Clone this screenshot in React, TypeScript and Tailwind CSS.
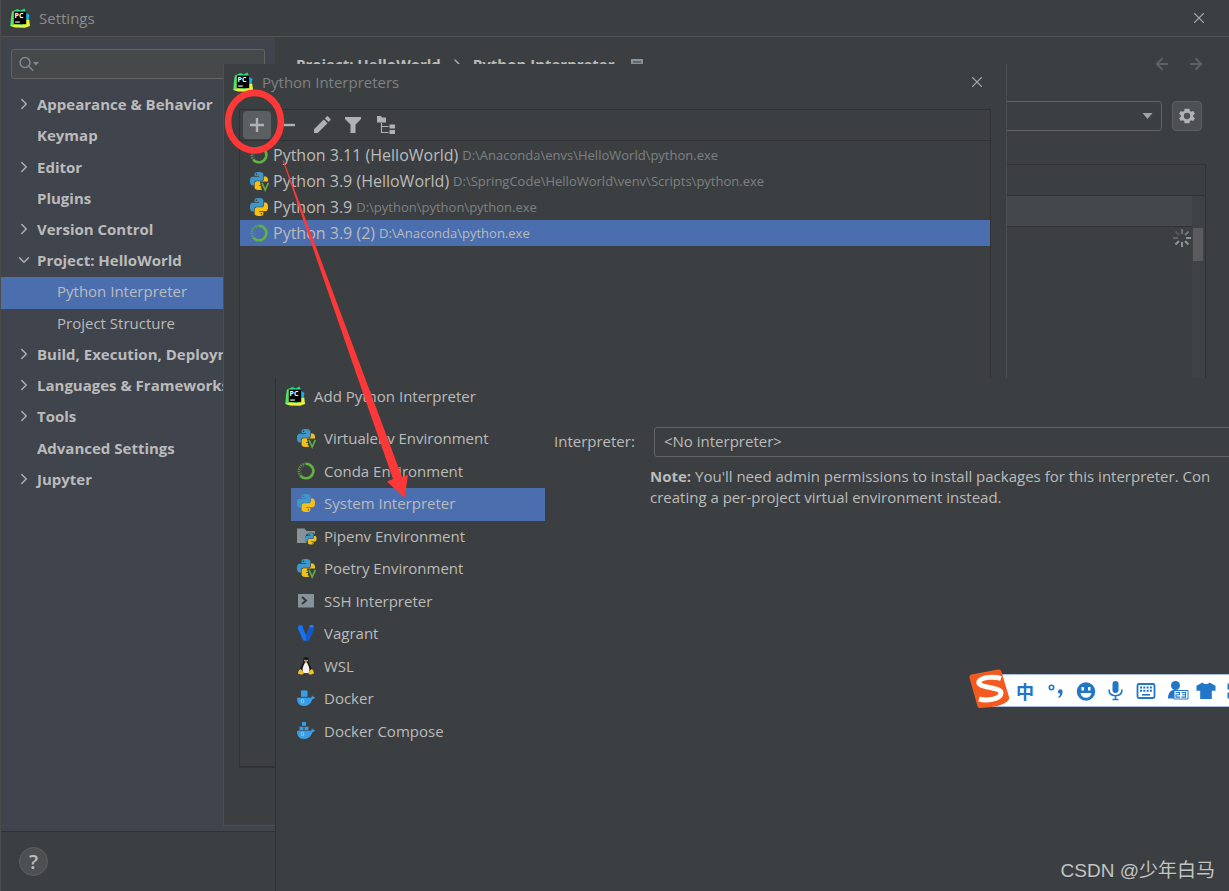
import clsx from "clsx";
import { ArrowLeft, ArrowRight, ChevronDown, ChevronRight, X } from "lucide-react";
import type { ReactNode } from "react";

interface TreeItem {
  label: string;
  state?: "open" | "closed";
  child?: boolean;
  selected?: boolean;
}

interface Interpreter {
  name: string;
  path: string;
  icon: ReactNode;
  selected?: boolean;
}

interface EnvironmentType {
  label: string;
  icon: ReactNode;
  selected?: boolean;
}

const PYTHON_HALF =
  "M14.25.18l.9.2.73.26.59.3.45.32.34.34.25.34.16.33.1.3.04.26.02.2-.01.13V8.5l-.05.63-.13.55-.21.46-.26.38-.3.31-.33.25-.35.19-.35.14-.33.1-.3.07-.26.04-.21.02H8.77l-.69.05-.59.14-.5.22-.41.27-.33.32-.27.35-.2.36-.15.37-.1.35-.07.32-.04.27-.02.21v3.06H3.17l-.21-.03-.28-.07-.32-.12-.35-.18-.36-.26-.36-.36-.35-.46-.32-.59-.28-.73-.21-.88-.14-1.05-.05-1.23.06-1.22.16-1.04.24-.87.32-.71.36-.57.4-.44.42-.33.42-.24.4-.16.36-.1.32-.05.24-.01h.16l.06.01h8.16v-.83H6.18l-.01-2.75-.02-.37.05-.34.11-.31.17-.28.25-.26.31-.23.38-.2.44-.18.51-.15.58-.12.64-.1.71-.06.77-.04.84-.02 1.27.05zm-6.3 1.98l-.23.33-.08.41.08.41.23.34.33.22.41.09.41-.09.33-.22.23-.34.08-.41-.08-.41-.23-.33-.33-.22-.41-.09-.41.09z";

function PythonShape() {
  return (
    <>
      <path d={PYTHON_HALF} fill="#3d97c9" />
      <path d={PYTHON_HALF} fill="#f5c012" transform="rotate(180 12 12)" />
    </>
  );
}

function PythonIcon() {
  return (
    <svg viewBox="0 0 24 24" className="size-[18px]">
      <PythonShape />
    </svg>
  );
}

function VenvIcon() {
  return (
    <svg viewBox="0 0 24 24" className="size-[18px] overflow-visible">
      <PythonShape />
      <path d="M13 12.5h13.5l-4 14h-5.5z" className="fill-[#3c3f41]" />
      <path d="M16 14.5l4.2 9.5 4.3-9.500" fill="none" stroke="#5fad3f" strokeWidth="2.200" />
    </svg>
  );
}

function CondaIcon() {
  return (
    <svg viewBox="0 0 18 18" className="size-[18px]" fill="none" stroke="#5fb53c">
      <path d="M9 1.700a7.300 7.300 0 1 1-5.500 12.100" strokeWidth="2.600" />
      <path d="M3.800 14.100A7.300 7.300 0 0 1 9 1.700" strokeWidth="2.400" strokeDasharray="1.300 0.900" opacity="0.75" />
      <path d="M5.200 12.500A5.400 5.400 0 0 1 8 3.700" strokeWidth="0.800" strokeDasharray="1 1.200" opacity="0.700" />
    </svg>
  );
}

function PipenvIcon() {
  return (
    <svg viewBox="0 0 20 18" className="h-[18px] w-[20px]">
      <path d="M0 1.500h7.500l2 2.500H18v12H0z" fill="#87939a" />
      <circle cx="14" cy="11.500" r="6" fill="#3c3f41" />
      <g transform="translate(8 6) scale(0.480)">
        <PythonShape />
      </g>
    </svg>
  );
}

function SshIcon() {
  return (
    <svg viewBox="0 0 18 18" className="size-[18px]">
      <path d="M1 2h16v13.500H1z" fill="#87939a" />
      <path d="M5 5l4 3.500L5 12" fill="none" stroke="#34383a" strokeWidth="2" />
    </svg>
  );
}

function VagrantIcon() {
  return (
    <svg viewBox="0 0 18 18" className="size-[18px]">
      <path d="M1 2.200L3.500 1 6 2.200v2L9 11.500l3-7.300v-2L14.500 1 17 2.200v2.600l-5 11.400L9 17l-3-.8L1 4.800z" fill="#1a72f0" />
      <path d="M12 2.200L17 2.200v2.600l-5 11.400L9 17v-5.500l3-7.300z" fill="#1459c9" />
      <path d="M12 2.200L14.500 1 17 2.200l-2.500 1.200z" fill="#2a85ff" />
    </svg>
  );
}

function LinuxIcon() {
  return (
    <svg viewBox="0 0 18 18" className="size-[18px]">
      <path d="M9 0C6.800 0 6.200 1.700 6.300 3.500c.1 2-.5 3-1.500 4.500C3.500 10 3 12 3.300 14.500h11.400c.3-2.500-.4-4.800-1.700-6.500-1-1.400-1.400-2.500-1.300-4.500C11.800 1.500 11.200 0 9 0z" fill="#17191a" />
      <path d="M9 5.500c-1.300.2-1.700 1.500-2.400 3-1 2-1.600 5-.1 7.500h5c1.500-2.500.8-5.500-.1-7.500-.7-1.500-1.100-2.800-2.400-3z" fill="#f3f3f3" />
      <circle cx="7.900" cy="3.400" r="0.700" fill="#eee" />
      <circle cx="10.100" cy="3.400" r="0.700" fill="#eee" />
      <path d="M7.300 4.800L9 4l1.700.8L9 6.200z" fill="#f5b71c" />
      <path d="M3.200 12l2.200 1.500 1.300 3c-1 1.300-2.500 1.300-4 .8l-1.800-.8.700-2.500zM14.800 12l-2.200 1.500-1.300 3c1 1.300 2.500 1.300 4 .8l1.800-1.300-.9-2.500z" fill="#f7bd1a" />
    </svg>
  );
}

function DockerIcon({ compose }: { compose?: boolean }) {
  return (
    <svg viewBox="0 0 18 18" className="size-[18px]" fill="#379fea">
      <path d="M0 8.800h14c.8-.6 1-1.500.7-3l1.300 2 2 .2c-.2 1.300-1.200 2-2.700 2.200C14 14.700 11 17 7 17c-4.700 0-7-3-7-8.200z" />
      {compose ? (
        <path d="M5 0h4v3.800H5zM2.500 4.800h4v3.400h-4zM7.500 4.800h4v3.400h-4z" />
      ) : (
        <path d="M4 1.500h6.500v6.300H4z" />
      )}
      <ellipse cx="5.500" cy="12" rx="1.300" ry="1.900" fill="none" stroke="#9fd4fb" strokeWidth="0.800" />
    </svg>
  );
}

function PyCharmLogo() {
  return (
    <svg viewBox="0 0 20 20" className="size-5 shrink-0">
      <path d="M2 3.500L7.500 1l3 1.500L14.500.5 16 4l1 14.500L12 19l-7-.2L.5 18 .8 11z" fill="#28dc86" />
      <path d="M14 3.500l5.500 3.500-1 4.500-2.500 1z" fill="#10b5f0" />
      <path d="M1.500 15.500L.5 18l4.500 1.500 10 .3 5-1.800-.8-6.500-3 .5-4 5z" fill="#e8f43c" />
      <path d="M2 4l2-1 .3 14L.5 17.500z" fill="#5be35a" />
      <path d="M3.800 3.600h12.400v12.600H3.800z" fill="#000" />
      <text x="4.500" y="10" fontSize="7" fontWeight="700" fill="#fff" className="font-['Open_Sans',sans-serif]">
        PC
      </text>
      <path d="M5.200 13.500h4.600v1.100H5.200z" fill="#fff" />
    </svg>
  );
}

const tree: TreeItem[] = [
  { label: "Appearance & Behavior", state: "closed" },
  { label: "Keymap" },
  { label: "Editor", state: "closed" },
  { label: "Plugins" },
  { label: "Version Control", state: "closed" },
  { label: "Project: HelloWorld", state: "open" },
  { label: "Python Interpreter", child: true, selected: true },
  { label: "Project Structure", child: true },
  { label: "Build, Execution, Deployment", state: "closed" },
  { label: "Languages & Frameworks", state: "closed" },
  { label: "Tools", state: "closed" },
  { label: "Advanced Settings" },
  { label: "Jupyter", state: "closed" },
];

const interpreters: Interpreter[] = [
  { name: "Python 3.11 (HelloWorld)", path: "D:\\Anaconda\\envs\\HelloWorld\\python.exe", icon: <CondaIcon /> },
  { name: "Python 3.9 (HelloWorld)", path: "D:\\SpringCode\\HelloWorld\\venv\\Scripts\\python.exe", icon: <VenvIcon /> },
  { name: "Python 3.9", path: "D:\\python\\python\\python.exe", icon: <PythonIcon /> },
  { name: "Python 3.9 (2)", path: "D:\\Anaconda\\python.exe", icon: <CondaIcon />, selected: true },
];

const environments: EnvironmentType[] = [
  { label: "Virtualenv Environment", icon: <VenvIcon /> },
  { label: "Conda Environment", icon: <CondaIcon /> },
  { label: "System Interpreter", icon: <PythonIcon />, selected: true },
  { label: "Pipenv Environment", icon: <PipenvIcon /> },
  { label: "Poetry Environment", icon: <VenvIcon /> },
  { label: "SSH Interpreter", icon: <SshIcon /> },
  { label: "Vagrant", icon: <VagrantIcon /> },
  { label: "WSL", icon: <LinuxIcon /> },
  { label: "Docker", icon: <DockerIcon /> },
  { label: "Docker Compose", icon: <DockerIcon compose /> },
];

function Sidebar() {
  return (
    <aside className="w-[274px] shrink-0 bg-[#40444d]">
      <div className="mx-[10px] mt-3 flex h-[30px] items-center rounded-[3px] border border-[#646464] bg-[#45494a] pl-[7px]">
        <svg viewBox="0 0 22 16" className="h-4 w-[22px]" fill="none" stroke="#7f8b91" strokeWidth="1.500">
          <circle cx="6" cy="6.500" r="5" />
          <path d="M9.700 10.200l4.500 4.500" />
          <path d="M14 6h6l-3 3.500z" fill="#7f8b91" stroke="none" />
        </svg>
        <input aria-label="Search settings" className="min-w-0 flex-1 bg-transparent outline-none" />
      </div>
      <ul className="mt-[11px] grid h-[406px] auto-rows-fr">
        {tree.map((item) => (
          <li key={item.label} className="flex">
            <button
              className={clsx(
                "flex w-full items-center pb-[3px] text-left whitespace-nowrap",
                item.child ? "pl-14" : "pl-[14px] font-bold",
                item.selected && "bg-[#4b6eaf]",
              )}
            >
              {!item.child && (
                <span className="w-[22px] text-[#adb0b2]">
                  {item.state === "closed" && <ChevronRight className="size-[18px]" />}
                  {item.state === "open" && <ChevronDown className="size-[18px]" />}
                </span>
              )}
              {item.label}
            </button>
          </li>
        ))}
      </ul>
    </aside>
  );
}

function ProjectInterpreterPanel() {
  return (
    <main className="flex min-w-0 flex-1 flex-col pr-[23px]">
      <div className="mt-[15px] flex h-6 items-center pr-px pl-[21px]">
        <span className="font-bold">Project: HelloWorld</span>
        <ChevronRight className="mx-2 size-4 text-[#adb0b2]" />
        <span className="font-bold">Python Interpreter</span>
        <svg viewBox="0 0 12 10" className="ml-4 h-[10px] w-3">
          <path d="M0 0h12v10H0z" fill="#87939a" />
          <path d="M2 3h8M2 6h8" stroke="#3c3f41" />
        </svg>
        <div className="ml-auto flex gap-4 text-[#5e6164]">
          <button aria-label="Back">
            <ArrowLeft className="size-[18px]" strokeWidth={2.5} />
          </button>
          <button aria-label="Forward">
            <ArrowRight className="size-[18px]" strokeWidth={2.5} />
          </button>
        </div>
      </div>
      <div className="mt-[25px] flex gap-[10px] pl-[150px] pr-1">
        <div className="relative flex-1">
          <select aria-label="Python Interpreter" className="h-[30px] w-full appearance-none rounded-[3px] border border-[#646464] bg-[#3c3f41]" />
          <svg viewBox="0 0 10 6" className="pointer-events-none absolute top-3 right-[9px] h-[6px] w-[11px]">
            <path d="M0 0h10L5 6z" fill="#9fa2a4" />
          </svg>
        </div>
        <button aria-label="Interpreter options" className="flex size-[30px] items-center justify-center rounded-[4px] border border-[#5e6060] bg-[#4c5052]">
          <svg viewBox="0 0 24 24" className="size-5" fill="#afb1b3">
            <path d="M19.400 13a7.500 7.500 0 0 0 0-2l2.100-1.700-2-3.400-2.500 1a7.300 7.300 0 0 0-1.700-1L15 3.300h-6l-.3 2.600a7.300 7.300 0 0 0-1.700 1l-2.500-1-2 3.400L4.600 11a7.500 7.500 0 0 0 0 2l-2.100 1.700 2 3.400 2.500-1a7.300 7.300 0 0 0 1.700 1l.3 2.600h6l.3-2.600a7.300 7.300 0 0 0 1.700-1l2.500 1 2-3.400zM12 15.800a3.800 3.800 0 1 1 0-7.600 3.800 3.800 0 0 1 0 7.600z" />
          </svg>
        </button>
      </div>
      <div className="mt-[33px] flex flex-1 flex-col border border-[#323232]">
        <div className="h-[31px] border-b border-[#323232]" />
        <div className="flex flex-1">
          <div className="flex-1">
            <div className="h-[31px] border-b border-[#323232] bg-[#45484a]" />
            <svg viewBox="0 0 18 18" className="mt-[2px] mr-px ml-auto size-[18px]" stroke="#8b9499" strokeWidth="2">
              <path d="M9 0v5" opacity="0.600" />
              <path d="M12 6l3.500-3.500" opacity="0.700" />
              <path d="M13 9h5M12 12l3.500 3.500M9 13v5M6 12l-3.500 3.500" />
              <path d="M5 9H0" opacity="0.450" />
              <path d="M6 6L2.500 2.500" opacity="0.300" />
            </svg>
          </div>
          <div className="w-[13px] bg-[#3f4244] pt-8">
            <div className="ml-px h-[33px] w-[10px] bg-[#595b5d]" />
          </div>
        </div>
      </div>
    </main>
  );
}

function InterpretersDialog() {
  return (
    <section className="absolute top-16 right-[222px] bottom-[65px] left-[222px] flex flex-col border-x border-b border-[#4b4e53] bg-[#3c3f41] px-[15px] pb-[57px]">
      <header className="-ml-[6px] flex h-[45px] items-center pb-[10px] text-[#7e8183]">
        <PyCharmLogo />
        <h2 className="ml-[9px]">Python Interpreters</h2>
        <button aria-label="Close" className="mr-[5px] ml-auto text-[#a2a4a6]">
          <X className="size-[18px]" strokeWidth={1.5} />
        </button>
      </header>
      <div className="flex-1 border border-b-2 border-[#323232]">
        <div className="flex h-[31px] items-center border-b border-[#323232] pl-[3px] text-[#afb1b3]">
          <button aria-label="Add" className="flex size-7 items-center justify-center rounded-[4px] bg-[#5b5f61]">
            <svg viewBox="0 0 14 14" className="size-[14px]" stroke="currentColor" strokeWidth="2.400">
              <path d="M7 0v14M0 7h14" />
            </svg>
          </button>
          <button aria-label="Remove" className="ml-2">
            <svg viewBox="0 0 16 16" className="size-4" stroke="currentColor" strokeWidth="2.400">
              <path d="M1 8h15" />
            </svg>
          </button>
          <button aria-label="Edit" className="ml-[18px]">
            <svg viewBox="0 0 18 18" className="size-[18px]" fill="currentColor">
              <path d="M1 13.300L10.800 3.500l3.700 3.700L4.700 17H1zM11.900 2.400L13.700.6c.4-.4 1-.4 1.400 0l2.300 2.300c.4.4.4 1 0 1.400l-1.800 1.800z" />
            </svg>
          </button>
          <button aria-label="Filter" className="ml-[14px]">
            <svg viewBox="0 0 16 16" className="size-4" fill="currentColor">
              <path d="M0 0h16v2l-5.500 5.500V16h-5V7.500L0 2z" />
            </svg>
          </button>
          <button aria-label="Show paths" className="ml-4">
            <svg viewBox="0 0 19 18" className="h-[18px] w-[19px]" fill="currentColor">
              <path d="M0 0h4l1 1.500h4V6.500H0zM12.500 8.500h5.500v4h-5.500zM12.500 14h5.500v4h-5.500z" />
              <path d="M4.500 7v9.500h7M4.500 10.500h7" fill="none" stroke="currentColor" strokeWidth="1.200" />
            </svg>
          </button>
        </div>
        <ul className="pt-px">
          {interpreters.map((item) => (
            <li
              key={item.name}
              className={clsx("flex h-[26px] items-center pl-[10px]", item.selected && "bg-[#4b6eaf]")}
            >
              {item.icon}
              <span className="ml-[5px] text-[16px]">{item.name}</span>
              <span className={clsx("ml-1 text-[13px]", !item.selected && "text-[#7e8183]")}>{item.path}</span>
            </li>
          ))}
        </ul>
      </div>
    </section>
  );
}

function AddInterpreterDialog() {
  return (
    <section className="absolute top-[378px] -right-40 bottom-0 left-[274px] border-l border-[#2f3133] bg-[#3c3f41]">
      <header className="flex h-[37px] items-center pb-[2px] pl-[9px]">
        <PyCharmLogo />
        <h2 className="ml-[9px]">Add Python Interpreter</h2>
      </header>
      <div className="mt-2 flex pl-[15px]">
        <ul className="grid h-[325px] w-[254px] shrink-0 auto-rows-fr">
          {environments.map((item) => (
            <li key={item.label} className="flex">
              <button
                className={clsx("flex w-full items-center pb-[2px] pl-[6px] text-left", item.selected && "bg-[#4b6eaf]")}
              >
                <span className="w-[27px]">{item.icon}</span>
                {item.label}
              </button>
            </li>
          ))}
        </ul>
        <div className="ml-[9px] min-w-0 flex-1 pt-1">
          <div className="flex items-center">
            <label htmlFor="interpreter" className="w-[100px] pb-[2px]">
              Interpreter:
            </label>
            <select
              id="interpreter"
              className="h-[30px] flex-1 appearance-none rounded-[3px] border border-[#646464] bg-[#3c3f41] px-[9px] pb-[2px]"
            >
              <option>&lt;No interpreter&gt;</option>
            </select>
          </div>
          <p className="mt-[9px] ml-[96px] leading-[21px] whitespace-nowrap">
            <b>Note:</b> You'll need admin permissions to install packages for this interpreter. Con
            <br />
            creating a per-project virtual environment instead.
          </p>
        </div>
      </div>
    </section>
  );
}

// Red ring round the add button and the arrow down to "System Interpreter"
function Annotation() {
  return (
    <svg viewBox="0 0 240 440" className="pointer-events-none absolute top-[80px] left-[209px] h-[440px] w-[240px]">
      <ellipse cx="44.500" cy="41.700" rx="26.400" ry="28.800" fill="none" stroke="#fd3838" strokeWidth="6.600" />
      <path d="M72.500 80L145 290 183 399 177 401.500 194.500 418 198 395 192 397 152 290 73.500 80z" fill="#fd3838" />
    </svg>
  );
}

function ImeBar() {
  return (
    <div className="absolute right-0 bottom-[182px] flex h-10 w-[260px] items-center overflow-hidden text-[#2176c7]">
      <div className="mt-[3px] ml-5 flex h-[33px] flex-1 items-center border-y border-[#a9bde0] bg-white pl-[21px]">
        <span className="w-[30px] shrink-0 text-center font-['Noto_Sans_CJK_SC',sans-serif] text-[18px] leading-5 font-bold">
          中
        </span>
        <svg viewBox="0 0 210 32" className="h-8 w-[210px] shrink-0" fill="currentColor">
          <circle cx="11.500" cy="12.500" r="2.200" fill="none" stroke="currentColor" strokeWidth="1.600" />
          <path d="M18 16.500a2.300 2.300 0 1 1 4.600 0c0 3-1 5-3.600 6.500l-.8-1c1.300-1 2-2 2-3.200-1.300 0-2.200-1-2.200-2.300z" />
          <circle cx="46" cy="16.500" r="9.200" />
          <path d="M41.500 12h2.500v3.500h-2.500zM48 12h2.500v3.500h-2.500zM40.500 18h11c-.5 3-2.500 4.700-5.500 4.700s-5-1.700-5.500-4.700z" fill="#fff" />
          <rect x="72.500" y="6" width="6" height="12" rx="3" />
          <path d="M69 14.500c0 4.500 3 6.200 6.500 6.200s6.500-1.700 6.500-6.200M75.500 21v3.500M72.500 24.500h6" fill="none" stroke="currentColor" strokeWidth="1.600" />
          <rect x="97.500" y="9" width="17" height="14" rx="1.500" fill="none" stroke="currentColor" strokeWidth="1.800" />
          <path d="M100 12.500h12.500M100 15.800h12.500" stroke="currentColor" strokeWidth="2" strokeDasharray="2 1.300" />
          <path d="M102 19.800h8" stroke="currentColor" strokeWidth="1.600" />
          <circle cx="135.500" cy="10.500" r="4.500" />
          <path d="M128 23.500c0-5 2-7.500 5-8.500h5v8.500z" />
          <path d="M134 15.500h14v8.500h-14z" fill="#fff" stroke="currentColor" />
          <path d="M135.500 17.500h4v2.300h-3.500v2.300h4M141.500 17.500h4v4.600h-4M142 19.800h3.500" fill="none" stroke="currentColor" strokeWidth="1.100" />
          <path d="M162.500 7.500c1.800 2 5.200 2 7 0l6 3.300v5h-3.700v8.200h-11.600v-8.200h-3.700v-5z" />
          <path d="M187.500 8.500h6v6h-6zM187.500 17.500h6v6h-6z" />
        </svg>
      </div>
      <svg viewBox="0 0 42 40" className="absolute top-0 left-0 h-10 w-[42px]">
        <path d="M2.500 5.500L29 .5c2-.4 3 .3 3.400 2L40 28c.5 2-.2 3-2 4.500-5 4-12 5.500-26 6.500-2.500.2-3.300-.5-3.700-2.500L.5 9c-.4-2 .2-3 2-3.500z" fill="#f4591f" />
        <path d="M32 9.500c-6-2-19-2-22 3-3 6.500 22 5 22 11.500 0 6-14 8.500-22 6" fill="none" stroke="#fff" strokeWidth="5" />
      </svg>
    </div>
  );
}

export default function App() {
  return (
    <div className="relative flex min-h-screen flex-col overflow-hidden border-l border-[#494b4d] bg-[#3c3f41] font-['Open_Sans',sans-serif] text-[15px] leading-5 text-[#bbbbbb]">
      <header className="flex h-[37px] items-center border-b border-[#515355] pr-[21px] pl-[9px] text-[#8b8d8f]">
        <PyCharmLogo />
        <h1 className="ml-[9px]">Settings</h1>
        <button aria-label="Close" className="ml-auto text-[#a2a4a6]">
          <X className="size-[18px]" strokeWidth={1.5} />
        </button>
      </header>
      <div className="flex flex-1">
        <Sidebar />
        <ProjectInterpreterPanel />
      </div>
      <footer className="flex h-[60px] items-center border-t border-[#2f3133] pl-[18px]">
        <button aria-label="Help" className="flex size-[29px] items-center justify-center rounded-full border border-[#5e6060] bg-[#4c5052] text-[20px] font-semibold">
          ?
        </button>
      </footer>
      <InterpretersDialog />
      <AddInterpreterDialog />
      <Annotation />
      <ImeBar />
      <p className="absolute right-[14px] bottom-2 font-['Liberation_Sans','Noto_Sans_CJK_SC',sans-serif] text-[19px] leading-6 text-[#c4c5c6] text-shadow-2xs">
        CSDN @少年白马
      </p>
    </div>
  );
}
